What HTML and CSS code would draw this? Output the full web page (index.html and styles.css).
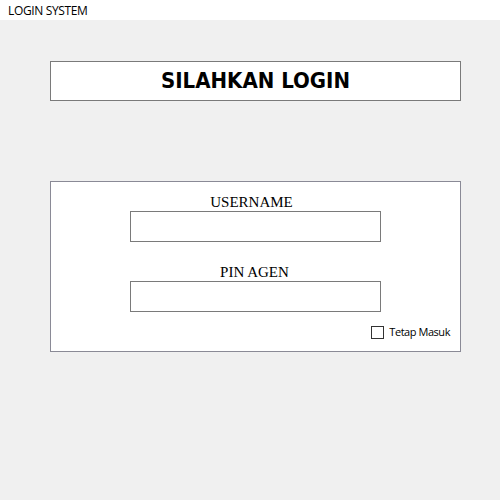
FILE: index.html
```html
<!DOCTYPE html>
<html>
<head>
<meta charset="utf-8">
<link rel="stylesheet" href="styles.css">
</head>
<body>
<div class="titlebar">LOGIN SYSTEM</div>
<main class="content">
  <div class="header"><h1 class="heading">SILAHKAN LOGIN</h1></div>
  <form class="panel">
    <label class="field-label first" for="user">USERNAME</label>
    <input class="field" id="user" type="text">
    <label class="field-label second" for="pin">PIN AGEN</label>
    <input class="field" id="pin" type="password">
    <div class="remember">
      <span class="checkbox"></span>
      <span class="remember-text">Tetap Masuk</span>
    </div>
  </form>
</main>
</body>
</html>
```
FILE: styles.css
```css
html, body {
  margin: 0;
  padding: 0;
  background: #f0f0f0;
  width: 500px;
  height: 500px;
}
.titlebar {
  height: 20px;
  background: #ffffff;
  padding-left: 8px;
  font-family: "Open Sans", "Liberation Sans", sans-serif;
  font-size: 12px;
  letter-spacing: -0.35px;
  line-height: 21px;
  color: #000;
}
.content {
  padding: 41px 40px 0 50px;
}
.header {
  width: 409px;
  height: 38px;
  border: 1px solid #7a7a7a;
  background: #fff;
  display: flex;
  align-items: center;
  justify-content: center;
}
.heading {
  margin: 0;
  font-family: "DejaVu Sans Condensed", "DejaVu Sans", sans-serif;
  font-stretch: condensed;
  font-weight: bold;
  font-size: 22px;
  line-height: 26px;
  color: #000;
}
.panel {
  margin: 80px 0 0 0;
  width: 409px;
  height: 158px;
  border: 1px solid #8a8a96;
  background: #fff;
  display: flex;
  flex-direction: column;
  align-items: center;
  padding-top: 11px;
  box-sizing: content-box;
}
.field-label {
  display: block;
  font-family: "Liberation Serif", serif;
  font-size: 15px;
  line-height: 18px;
  height: 18px;
  color: #000;
}
.field-label.first {
  padding-right: 8px;
}
.field-label.second {
  margin-top: 21px;
  padding-right: 2px;
}
.field {
  display: block;
  box-sizing: border-box;
  width: 251px;
  height: 31px;
  margin: 0;
  border: 1px solid #7a7a7a;
  background: #fff;
  padding: 0;
  outline: none;
}
.remember {
  align-self: stretch;
  display: flex;
  justify-content: flex-end;
  align-items: center;
  gap: 5px;
  padding-right: 10px;
  margin-top: 13px;
}
.checkbox {
  display: block;
  width: 11px;
  height: 11px;
  border: 1px solid #333;
  background: #fff;
}
.remember-text {
  font-family: "Open Sans", "Liberation Sans", sans-serif;
  font-size: 11px;
  letter-spacing: -0.45px;
  line-height: 14px;
  color: #000;
}
```
